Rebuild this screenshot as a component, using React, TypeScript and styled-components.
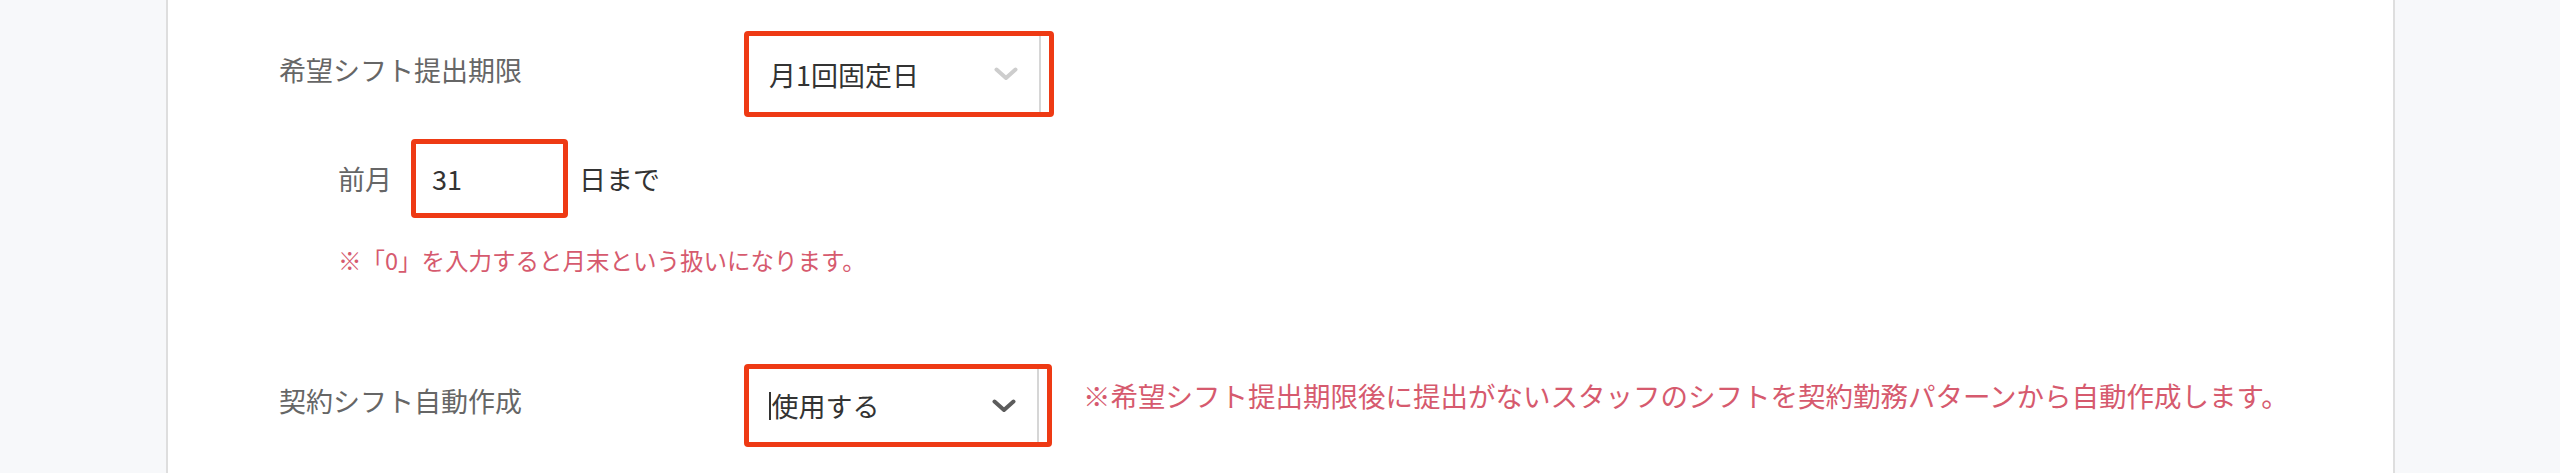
import React from "react";
import styled, { createGlobalStyle } from "styled-components";

const GlobalStyle = createGlobalStyle`
  html, body {
    margin: 0;
    padding: 0;
    background: #f7f8fa;
    font-family: "Noto Sans CJK JP", "Noto Sans", sans-serif;
  }
`;

const Panel = styled.div`
  box-sizing: border-box;
  width: 2229px;
  min-height: 100vh;
  margin-left: 166px;
  padding: 31px 0 0 111px;
  background: #fff;
  border-left: 2px solid #dedede;
  border-right: 2px solid #dedede;
`;

const Row = styled.div<{ $top?: number; $indent?: number; $height: number }>`
  display: flex;
  align-items: center;
  height: ${(p) => p.$height}px;
  margin-top: ${(p) => p.$top ?? 0}px;
  padding-left: ${(p) => p.$indent ?? 0}px;
`;

const Label = styled.div`
  flex-shrink: 0;
  width: 465px;
  padding-bottom: 9px;
  font-size: 27px;
  line-height: 40px;
  color: #666;
`;

const Frame = styled.div<{ $w: number; $h: number }>`
  box-sizing: border-box;
  display: flex;
  width: ${(p) => p.$w}px;
  height: ${(p) => p.$h}px;
  border: 5px solid #ee3a14;
  border-radius: 4px;
  background: #fff;
`;

const Select = styled.div`
  flex: 1;
  display: flex;
  align-items: center;
  justify-content: space-between;
  margin-right: 8px;
  padding: 0 21px 0 20px;
  border-right: 2px solid #d6d6d6;
  font-size: 27px;
  color: #333;
`;

const Value = styled.span`
  display: flex;
  align-items: center;
`;

const Caret = styled.span`
  display: inline-block;
  width: 1.5px;
  height: 28px;
  margin-right: 1px;
  background: #333;
`;

const NumberInput = styled.div`
  flex: 1;
  display: flex;
  align-items: center;
  padding-left: 16px;
  font-size: 27px;
  color: #333;
`;

const Text = styled.span<{ $muted?: boolean; $gap?: number }>`
  font-size: 27px;
  line-height: 40px;
  color: ${(p) => (p.$muted ? "#666" : "#333")};
  margin-right: ${(p) => p.$gap ?? 0}px;
`;

const Note = styled.div<{ $size: number; $lift?: number; $left?: number; $top?: number }>`
  font-size: ${(p) => p.$size}px;
  line-height: 1.5;
  color: #d65a6e;
  padding-bottom: ${(p) => p.$lift ?? 0}px;
  margin-left: ${(p) => p.$left ?? 0}px;
  margin-top: ${(p) => p.$top ?? 0}px;
  white-space: nowrap;
`;

function Chevron({ color }: { color: string }) {
  return (
    <svg width="24" height="14" viewBox="0 0 24 14">
      <polyline
        points="2.5,2.5 12,11 21.5,2.5"
        fill="none"
        stroke={color}
        strokeWidth="4"
        strokeLinecap="round"
        strokeLinejoin="round"
      />
    </svg>
  );
}

export default function App() {
  return (
    <>
      <GlobalStyle />
      <Panel>
        <Row $height={86}>
          <Label>希望シフト提出期限</Label>
          <Frame $w={310} $h={86}>
            <Select>
              <Value>月1回固定日</Value>
              <Chevron color="#cdcdcd" />
            </Select>
          </Frame>
        </Row>

        <Row $top={22} $indent={59} $height={79}>
          <Text $muted $gap={19}>前月</Text>
          <Frame $w={157} $h={79}>
            <NumberInput>31</NumberInput>
          </Frame>
          <Text style={{ marginLeft: 11 }}>日まで</Text>
        </Row>

        <Note $size={23.5} $left={59} $top={25}>
          ※「0」を入力すると月末という扱いになります。
        </Note>

        <Row $top={86} $height={83}>
          <Label>契約シフト自動作成</Label>
          <Frame $w={308} $h={83}>
            <Select>
              <Value>
                <Caret />
                使用する
              </Value>
              <Chevron color="#5c5c5c" />
            </Select>
          </Frame>
          <Note $size={27.5} $lift={21} $left={31}>
            ※希望シフト提出期限後に提出がないスタッフのシフトを契約勤務パターンから自動作成します。
          </Note>
        </Row>
      </Panel>
    </>
  );
}
